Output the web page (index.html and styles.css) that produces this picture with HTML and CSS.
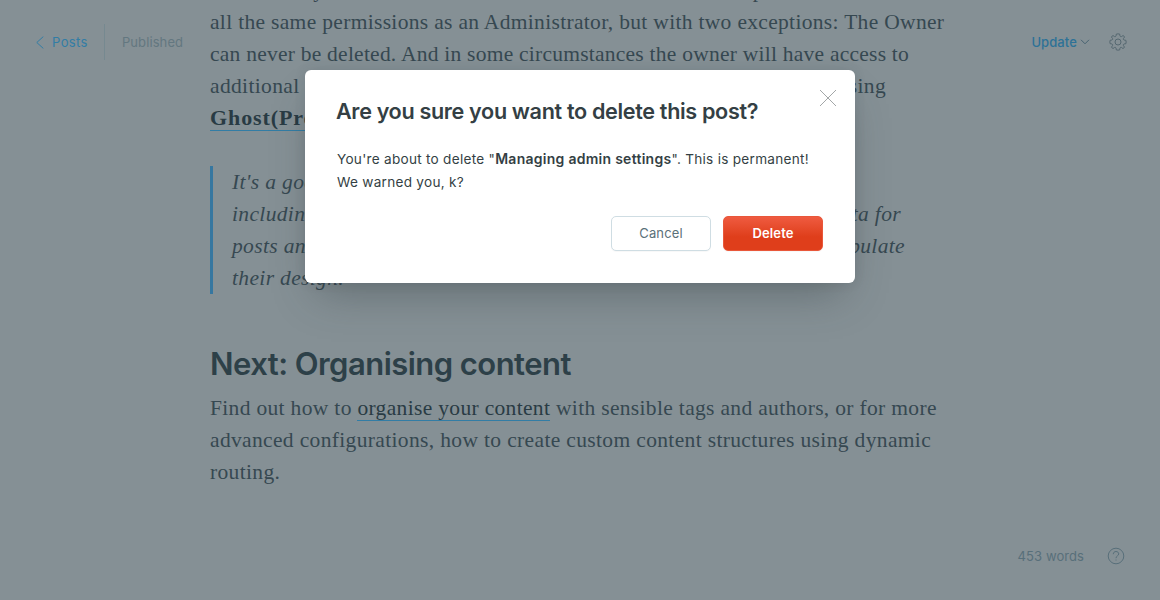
FILE: index.html
```html
<!DOCTYPE html>
<html lang="en">
<head>
<meta charset="utf-8">
<title>Managing admin settings</title>
<link rel="stylesheet" href="styles.css">
</head>
<body>
<div class="editor">
  <header class="bar">
    <nav class="crumbs">
      <a class="back"><svg width="8" height="13" viewBox="0 0 8 13"><path d="M7.3 .6L.8 6.5l6.5 5.9"/></svg>Posts</a>
      <span class="status">Published</span>
    </nav>
    <div class="tools">
      <a class="update">Update<svg width="10" height="6" viewBox="0 0 10 6"><path d="M1 .8l4 4 4-4"/></svg></a>
      <svg class="gear" width="18" height="18" viewBox="0 0 18 18"><circle cx="9" cy="9" r="3"/><path d="M7.300 1.100Q9 .6 10.700 1.100Q10.800 3.400 11.600 3.700Q12.300 4 14.100 2.500Q15 3 15.600 4Q14 5.700 14.300 6.400Q14.600 7.200 16.900 7.300Q17.400 9 16.900 10.700Q14.600 10.800 14.300 11.600Q14 12.300 15.500 14.100Q15 15 14 15.600Q12.300 14 11.600 14.300Q10.800 14.600 10.700 16.900Q9 17.400 7.300 16.900Q7.200 14.600 6.400 14.300Q5.700 14 4 15.600Q3 15 2.500 14.100Q4 12.300 3.700 11.600Q3.400 10.800 1.100 10.700Q.6 9 1.100 7.300Q3.400 7.200 3.700 6.400Q4 5.700 2.400 4Q3 3 4 2.500Q5.700 4 6.400 3.700Q7.200 3.400 7.300 1.100z"/></svg>
    </div>
  </header>
  <main class="post">
    <p class="para">
      <span class="line l0">There is only ever one owner of a Ghost site. Owners are special users which have</span>
      <span class="line l1">all the same permissions as an Administrator, but with two exceptions: The Owner</span>
      <span class="line l2">can never be deleted. And in some circumstances the owner will have access to</span>
      <span class="line l3">additional <span class="end">using</span></span>
      <span class="line l4"><a class="link strong">Ghost(Pro)</a></span>
    </p>
    <blockquote class="quote">
      <span class="line">It's a good</span>
      <span class="line">including <span class="end q1">data for</span></span>
      <span class="line">posts and <span class="end q2">populate</span></span>
      <span class="line">their design.</span>
    </blockquote>
    <h2 class="heading">Next: Organising content</h2>
    <p class="para">
      <span class="line l5">Find out how to <a class="link">organise your content</a> with sensible tags and authors, or for more</span>
      <span class="line l6">advanced configurations, how to create custom content structures using dynamic</span>
      <span class="line l7">routing.</span>
    </p>
  </main>
  <footer class="foot">
    <span>453 words</span>
    <svg width="18" height="18" viewBox="0 0 18 18"><circle cx="9" cy="9" r="7.8"/><path d="M6.300 7.200C6.300 5.500 7.400 4.500 9 4.500s2.700 1 2.700 2.400C11.700 8.900 9 8.800 9 11.200M9 12.600v.9"/></svg>
  </footer>
</div>
<section class="modal">
  <svg class="close" width="16" height="16" viewBox="0 0 16 16"><path d="M0 0l16 16M16 0L0 16"/></svg>
  <h1 class="title">Are you sure you want to delete this post?</h1>
  <p class="message">You're about to delete "<strong>Managing admin settings</strong>". This is permanent!<br>We warned you, k?</p>
  <div class="actions">
    <button class="btn cancel">Cancel</button>
    <button class="btn delete">Delete</button>
  </div>
</section>
</body>
</html>
```
FILE: styles.css
```css
* { box-sizing: border-box; }
body { margin: 0; height: 600px; overflow: hidden; background: #859095; font-family: Inter, sans-serif; }
svg { fill: none; stroke: currentColor; }
.editor { position: relative; height: 600px; overflow: hidden; }
.bar { position: absolute; inset: 24px 33px auto 36px; display: flex; justify-content: space-between; height: 36px; font-size: 13px; letter-spacing: .4px; }
.crumbs, .tools, .back, .update { display: flex; align-items: center; }
.back { color: #327da5; gap: 8px; padding-right: 16px; height: 36px; border-right: 1px solid #768990; }
.status { padding-left: 17px; color: #637780; letter-spacing: .1px; }
.update { color: #2d7297; font-weight: 500; letter-spacing: .1px; gap: 3px; }
.update svg { color: #486371; }
.tools { gap: 19px; }
.gear { color: #50636c; stroke-width: .9; }
.post { width: 740px; margin-left: 210px; margin-top: -26px; }
.para, .quote { margin: 0; font: 21.5px/32px "Liberation Serif", serif; color: #364851; }
.line { display: block; height: 32px; white-space: nowrap; position: relative; letter-spacing: .35px; }
.l0, .l1 { letter-spacing: .32px; }
.l0 { text-indent: -8px; word-spacing: 2.3px; }
.l2 { letter-spacing: .24px; }
.l4 { letter-spacing: .9px; }
.l5 { letter-spacing: .33px; }
.end { position: absolute; right: 64px; }
.q1 { right: 49px; }
.q2 { right: 45px; }
.link { color: #293b44; border-bottom: 1px solid #327da5; }
.strong { font-weight: bold; font-size: 22px; }
.quote { margin: 32px 0 0; border-left: 3px solid #3677a0; padding-left: 19px; font-style: italic; }
.heading { margin: 50px 0 9px; font-size: 31px; line-height: 39px; font-weight: 600; color: #2d4048; letter-spacing: -.54px; }
.foot { position: absolute; right: 35px; bottom: 35px; display: flex; align-items: center; gap: 23px; color: #586f7a; font-size: 13px; letter-spacing: .08px; }
.modal { position: absolute; left: 305px; top: 70px; width: 550px; height: 213px; padding: 28px 32px 32px; border-radius: 6px; background: #fff; box-shadow: 0 0 12px rgba(40,50,60,.12), 0 22px 40px -12px rgba(50,60,65,.4); color: #343f44; }
.close { position: absolute; right: 19px; top: 20px; color: #8b9092; stroke-width: .8; }
.title { margin: 0 0 0 -1px; font-size: 21.6px; line-height: 27px; font-weight: 600; white-space: nowrap; letter-spacing: -.34px; }
.message { height: 46px; margin: 22px 0 23px; font-size: 13.6px; line-height: 23px; letter-spacing: .27px; white-space: nowrap; }
.message strong { font-weight: 600; font-size: 14px; }
.actions { display: flex; justify-content: flex-end; gap: 12px; }
.btn { width: 100px; height: 35px; padding: 0; border: 1px solid #cfdde3; border-radius: 5px; background: #fff; color: #5b7079; font: 13px/33px Inter, sans-serif; letter-spacing: .15px; box-shadow: 0 1px 1px rgba(0,0,0,.03); }
.delete { border-color: #e9573a; background: linear-gradient(#ef5b40, #df3e1b 60%); color: #fff; font-weight: 600; }
```
